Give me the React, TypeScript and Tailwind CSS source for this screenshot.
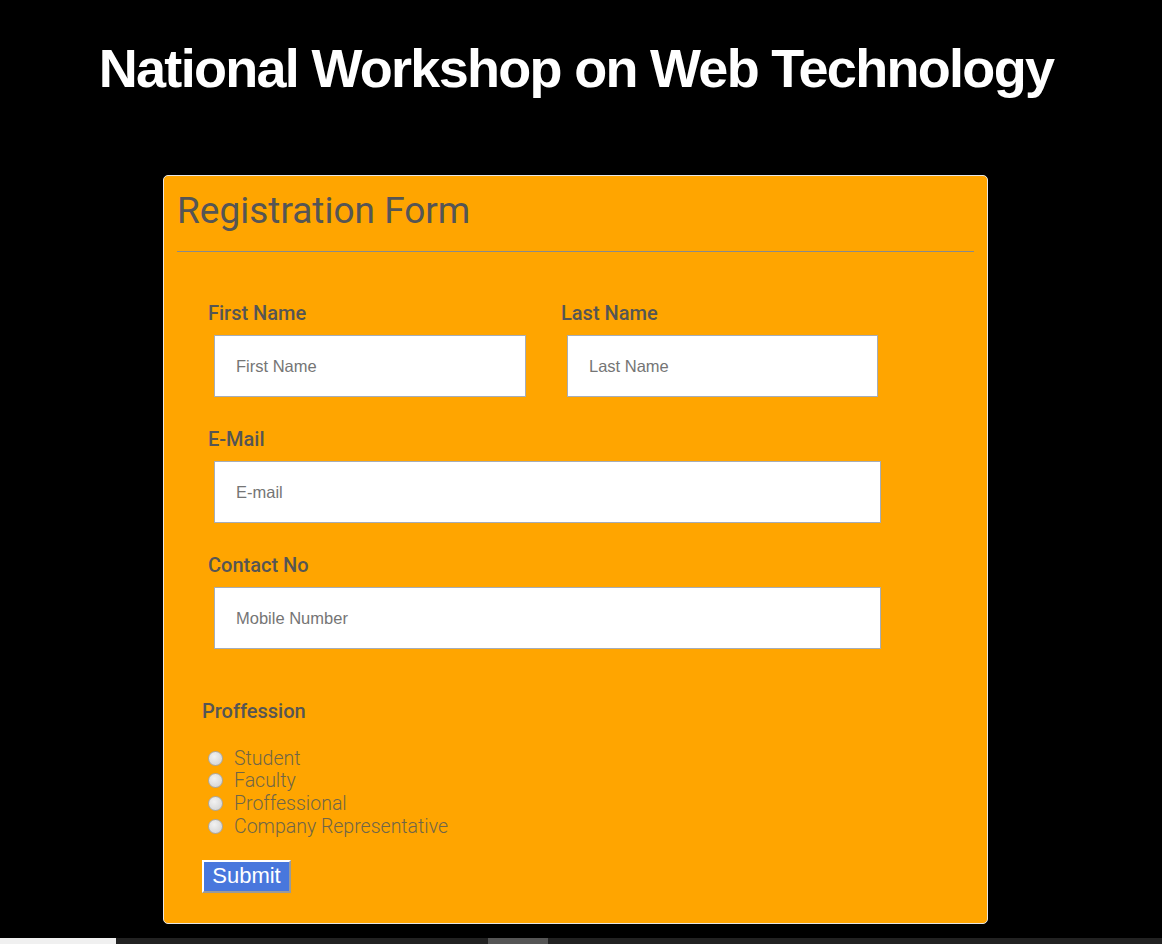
import { useState } from "react";

const roles = ["Student", "Faculty", "Proffessional", "Company Representative"];

function Field({
  label,
  placeholder,
  width,
}: {
  label: string;
  placeholder: string;
  width: string;
}) {
  return (
    <div className="flex flex-col">
      <label className="text-[20px] leading-[24px] font-medium text-[#555]">{label}</label>
      <input
        type="text"
        placeholder={placeholder}
        className={`${width} ml-[6px] mt-[10px] h-[62px] bg-white border border-[#a6adb8] pl-[21px] text-[16.5px] text-[#333] placeholder:text-[#757575] outline-none font-['Liberation_Sans',Arial,sans-serif]`}
      />
    </div>
  );
}

export default function App() {
  const [role, setRole] = useState("");

  return (
    <div className="h-[944px] bg-black flex flex-col font-['Roboto',sans-serif] overflow-hidden">
      <h1 className="pt-[38px] pr-[10px] text-center text-white text-[54px] leading-[60px] font-bold tracking-[-1.7px] font-['Liberation_Sans',Arial,sans-serif] whitespace-nowrap">
        National Workshop on Web Technology
      </h1>

      <div className="mt-[77px] ml-[163px] w-[825px] bg-[#ffa500] border border-[#e6e6e6] rounded-[5px] px-[13px] pt-[13px] pb-[13px]">
        <h2 className="text-[37px] leading-[43px] text-[#555]">Registration Form</h2>
        <hr className="mt-[19px] border-0 border-t border-[#8a8a8a]" />

        <form className="mt-[49px]" onSubmit={(e) => e.preventDefault()}>
          <div className="flex pl-[31px]">
            <div className="w-[353px]">
              <Field label="First Name" placeholder="First Name" width="w-[312px]" />
            </div>
            <Field label="Last Name" placeholder="Last Name" width="w-[311px]" />
          </div>

          <div className="pl-[31px] mt-[30px]">
            <Field label="E-Mail" placeholder="E-mail" width="w-[667px]" />
          </div>

          <div className="pl-[31px] mt-[30px]">
            <Field label="Contact No" placeholder="Mobile Number" width="w-[667px]" />
          </div>

          <div className="pl-[25px] mt-[50px]">
            <p className="text-[20px] leading-[24px] font-medium text-[#555]">Proffession</p>

            <div className="mt-[24px] pl-[6px]">
              {roles.map((r) => (
                <label key={r} className="flex items-center gap-[11px] h-[22.67px] cursor-pointer">
                  <input
                    type="radio"
                    name="role"
                    checked={role === r}
                    onChange={() => setRole(r)}
                    className="appearance-none w-[15px] h-[15px] rounded-full border border-[#a8a8a8] bg-[radial-gradient(circle_at_40%_35%,#f2f2f2,#cfcfcf)] checked:bg-[radial-gradient(circle,#4877dd_35%,#e0e0e0_45%)]"
                  />
                  <span className="text-[19.5px] font-light text-[#706548]">{r}</span>
                </label>
              ))}
            </div>

            <button
              type="submit"
              className="mt-[22px] mb-[17px] h-[33px] w-[89px] bg-[#4877dd] text-white text-[22px] leading-none font-['Liberation_Sans',Arial,sans-serif] border-2 border-t-white border-l-white border-b-[#9a9a9a] border-r-[#9a9a9a]"
            >
              Submit
            </button>
          </div>
        </form>
      </div>

      <div className="mt-auto flex h-[6px]">
        <div className="w-[116px] bg-[#f0f0f0]" />
        <div className="w-[372px] bg-[#222]" />
        <div className="w-[60px] bg-[#555]" />
        <div className="flex-1 bg-[#222]" />
      </div>
    </div>
  );
}
